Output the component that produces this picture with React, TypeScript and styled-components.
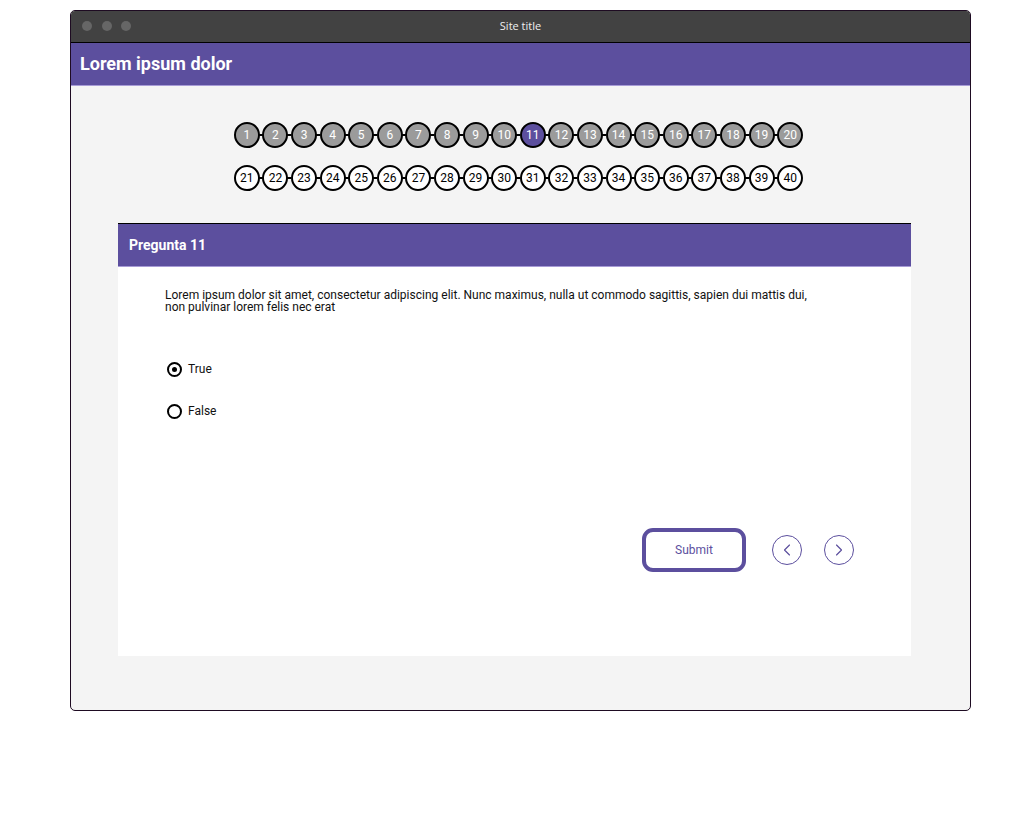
import React, { useState } from 'react'
import styled, { createGlobalStyle } from 'styled-components'
import { ChevronLeft, ChevronRight } from 'lucide-react'

const purple = '#5c4f9e'

const Global = createGlobalStyle`
body {
  margin: 0;
  background: #ffffff;
  font-family: Roboto, "Liberation Sans", sans-serif;
}
`

const Window = styled.div`
margin: 10px 0 0 70px;
width: 899px;
height: 699px;
border: 1px solid #1e0b22;
border-radius: 5px;
overflow: hidden;
display: flex;
flex-direction: column;
background: #f4f4f4;
`

const TitleBar = styled.div`
height: 32px;
box-sizing: border-box;
background: #424242;
border-bottom: 1px solid #000;
display: flex;
align-items: center;
position: relative;
padding: 0 0 1px 11px;
gap: 9.5px;
`

const Dot = styled.span`
width: 10px;
height: 10px;
border-radius: 50%;
background: #666;
`

const SiteTitle = styled.div`
position: absolute;
left: 0;
right: 0;
top: 7px;
text-align: center;
color: #f0f0f0;
font-family: "Open Sans", sans-serif;
font-size: 11px;
`

const Header = styled.div`
height: 43px;
box-sizing: border-box;
padding: 0 0 2px 9px;
background: ${purple};
border-bottom: 1px solid #a79bd6;
display: flex;
align-items: center;
color: #fff;
font-size: 18px;
font-weight: 700;
`

const Content = styled.div`
padding-top: 36px;
display: flex;
flex-direction: column;
`

const Pager = styled.div`
display: flex;
flex-direction: column;
align-items: center;
gap: 17px;
padding-right: 4px;
`

const PagerRow = styled.div`
display: flex;
gap: 2.6px;
`

const Bubble = styled.div<{ $state: 'done' | 'active' | 'todo' }>`
position: relative;
box-sizing: border-box;
width: 26px;
height: 26px;
border-radius: 50%;
border: 2px solid #000;
display: flex;
align-items: center;
justify-content: center;
font-size: 12px;
background: ${(p) => (p.$state === 'active' ? purple : p.$state === 'done' ? '#9b9b9b' : '#fff')};
color: ${(p) => (p.$state === 'todo' ? '#000' : '#fff')};
&:not(:last-child)::after {
  content: '';
  position: absolute;
  right: -5px;
  top: 10px;
  width: 5px;
  height: 1.5px;
  background: #000;
}
`

const Card = styled.div`
margin: 32px 0 0 47px;
width: 793px;
height: 432px;
border-top: 1px solid #000;
background: #fff;
display: flex;
flex-direction: column;
`

const CardHeader = styled.div`
height: 43px;
box-sizing: border-box;
padding: 0 0 1px 11px;
background: ${purple};
border-bottom: 1px solid #a79bd6;
display: flex;
align-items: center;
color: #fff;
font-size: 14px;
font-weight: 700;
`

const CardBody = styled.div`
padding: 22px 0 0 47px;
display: flex;
flex-direction: column;
`

const Question = styled.p`
margin: 0;
width: 648px;
font-size: 12px;
line-height: 12px;
color: #111;
`

const Options = styled.div`
margin-top: 49px;
display: flex;
flex-direction: column;
gap: 28px;
`

const Option = styled.label`
display: flex;
align-items: center;
gap: 6px;
font-size: 12px;
color: #111;
height: 14px;
cursor: pointer;
`

const Radio = styled.span<{ $on: boolean }>`
box-sizing: border-box;
margin-left: 2px;
width: 15px;
height: 15px;
border-radius: 50%;
border: 2px solid #000;
display: flex;
align-items: center;
justify-content: center;
&::after {
  content: '';
  width: 5px;
  height: 5px;
  border-radius: 50%;
  background: ${(p) => (p.$on ? '#000' : 'transparent')};
}
`

const Actions = styled.div`
margin-top: 110px;
padding-left: 477px;
display: flex;
align-items: center;
`

const SubmitButton = styled.button`
box-sizing: border-box;
width: 104px;
height: 44px;
border: 4px solid ${purple};
border-radius: 11px;
background: #fff;
color: ${purple};
font-family: Roboto, sans-serif;
font-size: 12px;
margin-right: 26px;
`

const NavButton = styled.button`
box-sizing: border-box;
width: 30px;
height: 30px;
border-radius: 50%;
border: 1px solid ${purple};
background: #fff;
color: ${purple};
display: flex;
align-items: center;
justify-content: center;
padding: 0;
margin-right: 22px;
`

export default function App() {
  const [answer, setAnswer] = useState<'true' | 'false'>('true')
  const current = 11
  const rows = [
    Array.from({ length: 20 }, (_, i) => i + 1),
    Array.from({ length: 20 }, (_, i) => i + 21),
  ]
  return (
    <>
      <Global />
      <Window>
        <TitleBar>
          <Dot />
          <Dot />
          <Dot />
          <SiteTitle>Site title</SiteTitle>
        </TitleBar>
        <Header>Lorem ipsum dolor</Header>
        <Content>
          <Pager>
            {rows.map((row, r) => (
              <PagerRow key={r}>
                {row.map((n) => (
                  <Bubble key={n} $state={n === current ? 'active' : n <= 20 ? 'done' : 'todo'}>
                    {n}
                  </Bubble>
                ))}
              </PagerRow>
            ))}
          </Pager>
          <Card>
            <CardHeader>Pregunta 11</CardHeader>
            <CardBody>
              <Question>
                Lorem ipsum dolor sit amet, consectetur adipiscing elit. Nunc maximus, nulla ut commodo sagittis, sapien dui mattis dui, non pulvinar lorem felis nec erat
              </Question>
              <Options>
                <Option onClick={() => setAnswer('true')}>
                  <Radio $on={answer === 'true'} />
                  True
                </Option>
                <Option onClick={() => setAnswer('false')}>
                  <Radio $on={answer === 'false'} />
                  False
                </Option>
              </Options>
              <Actions>
                <SubmitButton>Submit</SubmitButton>
                <NavButton>
                  <ChevronLeft size={20} strokeWidth={1.4} />
                </NavButton>
                <NavButton>
                  <ChevronRight size={20} strokeWidth={1.4} />
                </NavButton>
              </Actions>
            </CardBody>
          </Card>
        </Content>
      </Window>
    </>
  )
}
